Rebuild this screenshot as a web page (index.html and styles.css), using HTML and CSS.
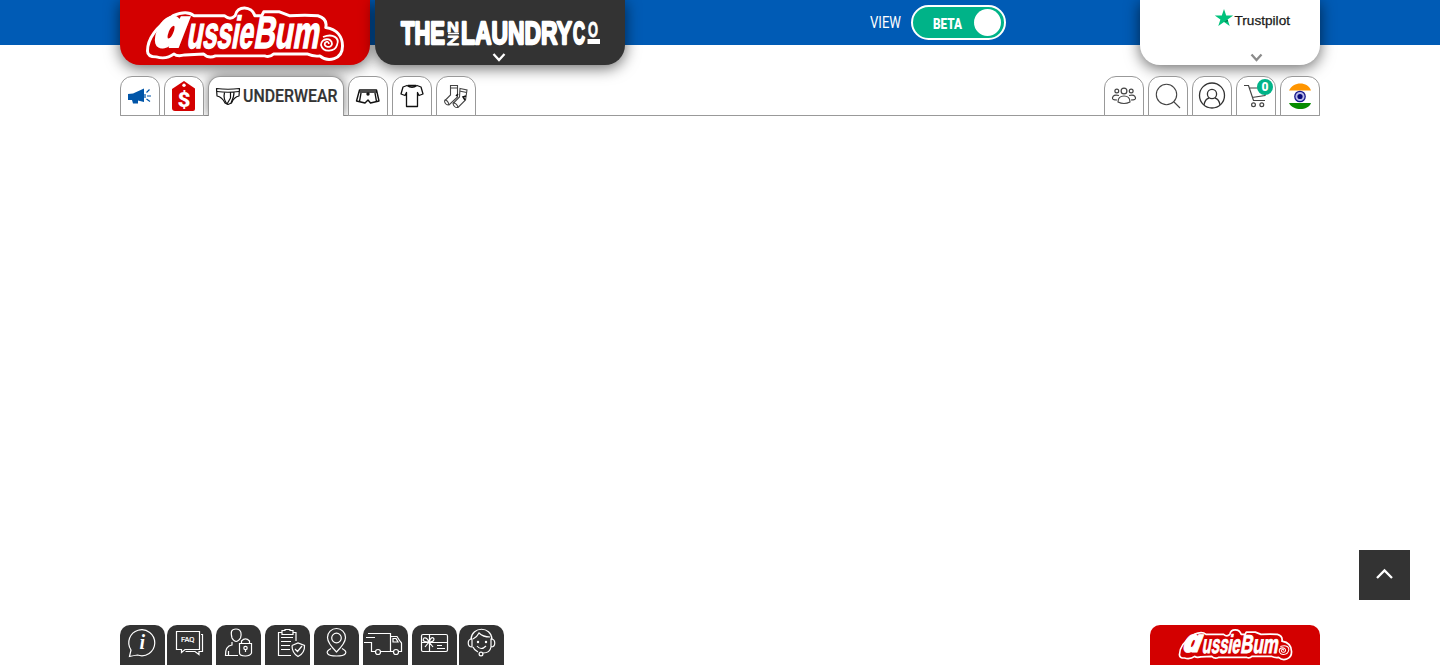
FILE: index.html
```html
<!DOCTYPE html>
<html lang="en">
<head>
<meta charset="utf-8">
<title>aussieBum</title>
<link rel="stylesheet" href="styles.css">
</head>
<body>
<svg class="defs" width="0" height="0" aria-hidden="true">
  <symbol id="brand" viewBox="0 0 200 65">
    <path d="M1 50C1 37 12 24 27 14Q41 8 48 14H79Q85 19 90 14C92 3 107 4 110 14H117L119 10H135L145 14Q162 13 174 14Q184 17 182 26C194 28 199 36 199 45C199 59 184 62 176 55Q170 56 163 53H129Q125 57 120 55H70Q63 58 58 53L39 54Q31 56 28 53Q20 59 10 56Q1 56 1 50Z" transform="translate(1.500 2) scale(.985 .98)" fill="#d30000" stroke="#fff" stroke-width="3" stroke-linejoin="round"/>
    <g class="brand-letters" transform="translate(0 47.5) skewX(-10)">
      <text class="brand-a" x="7" y="-.5" textLength="33" lengthAdjust="spacingAndGlyphs" font-size="54">a</text>
      <text x="41" y="0" textLength="66" lengthAdjust="spacingAndGlyphs" font-size="45">ussie</text>
      <text x="108" y="0" textLength="65" lengthAdjust="spacingAndGlyphs" font-size="45">Bum</text>
    </g>
    <path d="M178 37C188 33 195 38 192 45C190 52 178 53 176 45C176 38 187 37 187 44C186 49 178 47 180 43Q183 40 184 44" fill="none" stroke="#fff" stroke-width="1.800"/>
  </symbol>
</svg>

<header class="topbar">
  <div class="wrap topbar-row">
    <a class="panel panel-red"><svg width="200" height="65"><use href="#brand"/></svg></a>
    <a class="panel panel-dark">
      <svg width="202" height="65" viewBox="0 0 202 65">
        <g class="laundry-letters">
          <text x="2" y="44" font-size="32" textLength="44" lengthAdjust="spacingAndGlyphs">THE</text>
          <text class="small" x="48" y="31.500" font-size="14" textLength="12" lengthAdjust="spacingAndGlyphs">N</text>
          <text class="small" x="48" y="45" font-size="13" textLength="12" lengthAdjust="spacingAndGlyphs">Z</text>
          <text x="62" y="44" font-size="32" textLength="111" lengthAdjust="spacingAndGlyphs">LAUNDRY</text>
          <text x="174" y="43.500" font-size="31" textLength="12" lengthAdjust="spacingAndGlyphs">C</text>
          <text class="small" x="189" y="36.500" font-size="22" textLength="10" lengthAdjust="spacingAndGlyphs">O</text>
        </g>
        <path d="M49 33.500H60" stroke="#fff" stroke-width="1.500"/>
        <path d="M188.500 41.500H201" stroke="#fff" stroke-width="5"/>
        <path d="M94.500 54L100 60L105.500 54" fill="none" stroke="#fff" stroke-width="2.300"/>
      </svg>
    </a>
    <div class="view">
      <svg width="32" height="22"><text x="0" y="15.500" font-size="16" textLength="31" lengthAdjust="spacingAndGlyphs">VIEW</text></svg>
      <div class="toggle">
        <svg width="30" height="20"><text x="0" y="15.500" font-size="15.500" font-weight="900" textLength="29" lengthAdjust="spacingAndGlyphs">BETA</text></svg>
        <i class="knob"></i>
      </div>
    </div>
    <div class="panel panel-white">
      <svg width="180" height="65">
        <path d="M84 9L86.200 15.500H93.200L87.600 19.600L89.700 26L84 22L78.300 26L80.400 19.600L74.800 15.500H81.800Z" fill="#00c27c"/>
        <path d="M84 22L87.600 19.800L88.200 21.300Z" fill="#056b42"/>
        <text class="trust" x="94.500" y="24.500" font-size="12.500" textLength="55.500" lengthAdjust="spacingAndGlyphs">Trustpilot</text>
        <path d="M111.500 54.500L116.500 60L121.500 54.500" fill="none" stroke="#8b8b8b" stroke-width="2.300"/>
      </svg>
    </div>
  </div>
</header>

<nav class="wrap tabs">
  <a class="tab"><svg width="38" height="39" viewBox="0 0 38 39">
    <path d="M7 17L12 16.500L23 11.500V25L17 23.500V26.500H12L11 23H7Z" fill="#0055a8"/>
    <path d="M25.500 15.500L28.500 12.500M26 19H30M25.500 22L29 24.500M24 17V21" stroke="#0055a8" stroke-width="1.200"/></svg></a>
  <a class="tab"><svg width="38" height="39" viewBox="0 0 38 39">
    <path d="M19 4L30 11.500V32Q30 34 28 34H10Q7 34 7 31V12Z" fill="#d30000"/><circle cx="19" cy="8.300" r="1.700" fill="#fff"/>
    <text class="dollar" x="12.500" y="29.500" font-size="20" textLength="13" lengthAdjust="spacingAndGlyphs">$</text></svg></a>
  <a class="tab tab-active">
    <svg width="134" height="39" viewBox="0 0 134 39">
      <g fill="none" stroke="#111" stroke-width="1.200" stroke-linejoin="round"><path d="M7.500 11.500Q19 13 30.500 11.500L30 19Q25 20 22.500 26L19 27.500L16 26Q13 20 8 19Z"/><path d="M8 14.500Q19 16 30 14.500M15.500 15.500Q14 22 18 27M21.500 15.500V21L18 27M25 15.500Q25 20 22 26"/></g>
      <text class="tab-name" x="34" y="24.800" font-size="17.500" textLength="94.500" lengthAdjust="spacingAndGlyphs">UNDERWEAR</text>
    </svg></a>
  <a class="tab"><svg width="38" height="39" viewBox="0 0 38 39"><g fill="none" stroke="#111" stroke-width="1.400" stroke-linejoin="round"><path d="M10.500 13H27.500L30 24L21.500 26L19 23L16 26L7.500 24Z"/><path d="M10.500 15H28M12 16L10.500 24.500M26 16L27.500 24.500"/><circle cx="19" cy="17" r="1" fill="#111"/></g></svg></a>
  <a class="tab"><svg width="38" height="39" viewBox="0 0 38 39"><path d="M14 8.500Q19 12 24 8.500L28 10L30 17L26 18.500L24.500 15.500V29.500H13.500V15.500L12 18.500L8 17L10 10ZM15 8.500H23" fill="none" stroke="#111" stroke-width="1.300" stroke-linejoin="round"/></svg></a>
  <a class="tab"><svg width="38" height="39" viewBox="0 0 38 39"><g fill="none" stroke="#444" stroke-width="1.100"><path d="M13.500 8.500H20.500V20L12 28Q8 28 7.500 24L13.500 18ZM13.500 11H21M7.500 23Q11 23 12 28"/><path fill="#fff" d="M23 11.500L30 13L28.500 23L21 30.500Q17 31 16 26.500L22.500 20ZM22.500 14L29.500 15.500M16 26Q20 26 21 30.500"/><path d="M21 17L19 19M29 19L26 20L28 23" stroke="#111" stroke-width="1.500"/></g></svg></a>
  <span class="space"></span>
  <a class="tab"><svg width="38" height="39" viewBox="0 0 38 39"><g fill="none" stroke="#444" stroke-width="1.200"><circle cx="19" cy="14" r="2.900"/><circle cx="11.800" cy="14" r="1.900"/><circle cx="26.200" cy="14" r="1.900"/><path d="M13 25Q13 19 19 19T25 25Q19 28 13 25ZM12 23Q7 23 7.500 21Q8 17 14 18.500M26 23Q31 23 30.500 21Q30 17 24 18.500"/></g></svg></a>
  <a class="tab"><svg width="38" height="39" viewBox="0 0 38 39"><g fill="none" stroke="#444" stroke-width="1.100"><circle cx="17.500" cy="17.500" r="10.200"/><path d="M24.500 24.500L31 31"/></g></svg></a>
  <a class="tab"><svg width="38" height="39" viewBox="0 0 38 39"><g fill="none" stroke="#333" stroke-width="1.300"><circle cx="19" cy="18.500" r="12.500"/><circle cx="19" cy="17" r="4.600"/><path d="M11 28Q12 22 16 21M27 28Q26 22 22 21"/></g></svg></a>
  <a class="tab"><svg width="38" height="39" viewBox="0 0 38 39"><g fill="none" stroke="#444" stroke-width="1.200"><path d="M7 8.500H11.500L16.500 23.500H28M12.500 11H30L28 18.500L15 20.500"/><circle cx="16.500" cy="27.800" r="1.900"/><circle cx="24.800" cy="27.800" r="1.900"/></g></svg><b class="badge">0</b></a>
  <a class="tab"><svg width="38" height="39" viewBox="0 0 38 39"><path d="M8 13.500C12 4 27 4 30 13.500Z" fill="#ff9500"/><path d="M8 26C12 34 27 34 30 26Z" fill="#078b00"/><circle cx="19" cy="19.500" r="5.200" fill="#b9b9e8" stroke="#17178b" stroke-width="1.300"/><circle cx="19" cy="19.500" r="2.600" fill="#080879"/></svg></a>
</nav>

<main class="content"></main>

<footer class="wrap dock">
  <a class="dock-item"><svg width="45" height="40" viewBox="0 0 45 40"><path d="M9.500 31.500L11 25A13 13 0 1 1 17.500 30Q14 30.500 9.500 31.500Z"/><text class="info" x="19.500" y="24" font-size="20">i</text></svg></a>
  <a class="dock-item gap-s"><svg width="45" height="40" viewBox="0 0 45 40"><path d="M9.500 6.500H32.500V24.500H18L14.500 27.500V24.500H9.500ZM34 9.500H35.500V26.500H32V29.500L28 26.500H18.500"/><text class="faq" x="14" y="16.500" font-size="7.500" textLength="13.500" lengthAdjust="spacingAndGlyphs">FAQ</text></svg></a>
  <a class="dock-item"><svg width="45" height="40" viewBox="0 0 45 40"><path d="M20 4C26 4 25.500 10 24.500 13Q20 20 16 13C14.500 7 15 4 20 4ZM16 17V20Q9 21 9.500 30.500H22M12.500 26V30M23.500 18.500H35.500V28Q34 31 29.500 31Q23.500 31 23.500 28ZM25.500 18V16Q29.500 12 33.500 16V18M29.500 24V27"/><circle cx="29.500" cy="23" r="1.700"/></svg></a>
  <a class="dock-item"><svg width="45" height="40" viewBox="0 0 45 40"><path d="M17 7.500H13.500V30.500H26M28 7.500H31V16M17 5.500H20V4.500H25V5.500H28V9.500H17ZM16 12.500H28M16 16.500H26M16 20.500H25M16 24.500H25M27 20.500L33 18L39.500 20.500Q40 28 33 31.500Q27 28 27 20.500M30 24L32.500 26.500L37 21"/></svg></a>
  <a class="dock-item"><svg width="45" height="40" viewBox="0 0 45 40"><path d="M22.500 27Q13.500 18 13.500 12.500A9 9 0 0 1 31.500 12.500Q31.500 18 22.500 27ZM17 23.500C10 27 13 31 22.500 31S35 27 28 23.500"/><circle cx="22.500" cy="13" r="4.800"/></svg></a>
  <a class="dock-item"><svg width="45" height="40" viewBox="0 0 45 40"><path d="M5 8.500H27.500V26.500M3 12.500H12M1 17.500H9M8.500 17V26.500H12M18 26.500H30M28 11.500H34Q36 15 38.500 18V26.500H35M30 13.500H33L35 17H30Z"/><circle cx="15" cy="27" r="2.500"/><circle cx="33" cy="27" r="2.500"/></svg></a>
  <a class="dock-item"><svg width="45" height="40" viewBox="0 0 45 40"><rect x="9.500" y="9.500" width="26" height="17" rx="1.500"/><path d="M17.500 10V26M10 17.500H35M17 17Q9 17 12 13Q15 12 17 17Q20 10 22 14Q22 17 17 17L13 22M17 17L21 22M25 20.500H30M25 23.500H33"/></svg></a>
  <a class="dock-item gap-s"><svg width="45" height="40" viewBox="0 0 45 40"><path d="M13 22C8 22 8 14 13 14ZM32 22C37 22 37 14 32 14ZM12 14C13 1 32 1 33 14M14 14Q18 12 20 8Q24 12 31 12M14 22Q15 25 19 27M32 22Q31 28 24 28M18 21Q22 26 27 21"/><circle cx="22" cy="29" r="1.900"/><circle cx="19" cy="17" r=".6"/><circle cx="27" cy="17" r=".6"/></svg></a>
  <span class="space"></span>
  <a class="dock-brand"><svg width="115" height="38"><use href="#brand"/></svg></a>
</footer>
<a class="to-top"><svg width="51" height="50"><path d="M18 28L25.500 20.500L33 28" fill="none" stroke="#fff" stroke-width="2.300"/></svg></a>
</body>
</html>
```
FILE: styles.css
```css
* { box-sizing: border-box; }
body { margin: 0; height: 665px; overflow: hidden; display: flex; flex-direction: column; background: #fff; font-family: Roboto, "Noto Sans", sans-serif; }
svg { display: block; flex: none; overflow: visible; }
.defs { position: absolute; }
.wrap { width: 1200px; margin: 0 auto; display: flex; flex: none; }
.space { flex: 1; }
.topbar { height: 45px; background: #005bb5; flex: none; }
.topbar-row { align-items: flex-start; }
.panel { height: 65px; border-radius: 0 0 20px 20px; box-shadow: 0 3px 15px rgba(0,0,0,.6); display: flex; justify-content: center; }
.panel-red { width: 250px; background: #d30000; margin-right: 5px; }
.panel-dark { width: 250px; background: #333; }
.panel-white { width: 180px; background: #fff; margin-left: auto; }
.brand-letters { fill: #fff; stroke: #fff; stroke-width: 1.5px; font-family: "Liberation Sans", sans-serif; font-weight: 700; }
.brand-a { font-family: "Open Sans", "Noto Sans", sans-serif; font-style: italic; font-weight: 800; stroke-width: 1.8px; }
.laundry-letters { fill: #fff; stroke: #fff; stroke-width: 2.3px; stroke-linejoin: round; font-family: "Liberation Sans", sans-serif; font-weight: 700; }
.laundry-letters .small { stroke-width: .8px; }
.view { display: flex; align-items: center; gap: 9px; height: 45px; margin-left: 245px; fill: #fff; }
.toggle { width: 95px; height: 35px; border: 2px solid #fff; border-radius: 18px; background: #00b388; display: flex; align-items: center; justify-content: space-between; padding: 0 3px 0 20px; }
.knob { width: 27px; height: 27px; border-radius: 50%; background: #fff; }
.trust { fill: #191919; stroke: #191919; stroke-width: .25px; font-family: "Liberation Sans", sans-serif; }
.tabs { height: 51px; margin-top: 20px; padding-top: 11px; gap: 4px; background: linear-gradient(#999, #999) bottom / 100% 1px no-repeat; position: relative; clip-path: inset(0 -20px); }
.tab { width: 40px; height: 40px; border: 1px solid #999; border-radius: 12px 12px 0 0; background: #fff; position: relative; z-index: 1; }
.tab-active { width: 136px; border-bottom: 0; box-shadow: 0 0 12px rgba(0,0,0,.5); z-index: 0; }
.tab-name { fill: #333; stroke: #333; stroke-width: .2px; font-weight: 500; }
.dollar { fill: #fff; font-weight: 900; }
.badge { position: absolute; right: 2px; top: 2px; width: 16px; height: 16px; border-radius: 50%; background: #00b388; color: #fff; font-size: 12px; line-height: 16px; text-align: center; font-weight: 900; }
.content { flex: 1; }
.dock { height: 40px; gap: 4px; }
.dock-item { width: 45px; height: 40px; background: #333; border-radius: 10px 10px 0 0; }
.gap-s { margin-left: -2px; }
.dock-item svg { fill: none; stroke: #fff; stroke-width: 1.2px; }
.dock-item .info { fill: #fff; stroke: none; font: italic 700 20px "Liberation Serif", serif; }
.dock-item .faq { fill: #fff; stroke: #fff; stroke-width: .2px; }
.dock-brand { width: 170px; height: 40px; background: #d30000; border-radius: 10px 10px 0 0; display: flex; justify-content: center; }
.to-top { position: fixed; left: 1359px; top: 550px; width: 51px; height: 50px; background: #333; }
```
